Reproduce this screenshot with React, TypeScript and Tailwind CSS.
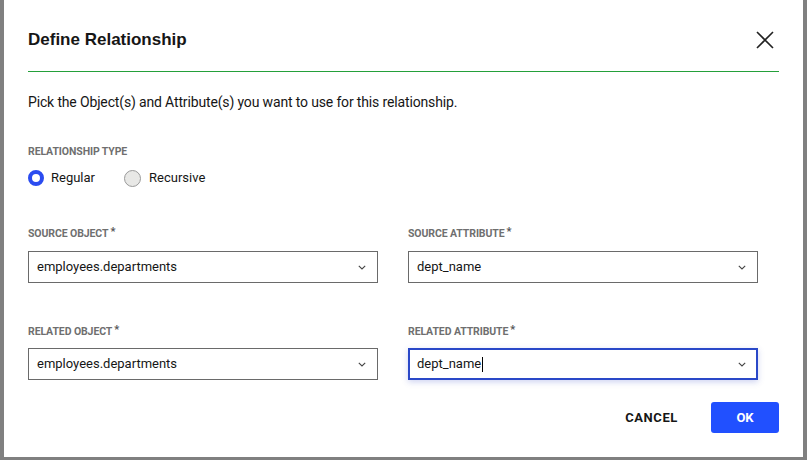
import React from "react";

const font = { fontFamily: "Roboto, 'Liberation Sans', Arial, sans-serif" };

function Chevron() {
  return (
    <svg width="8" height="5" viewBox="0 0 8 5" className="shrink-0">
      <path d="M0.8 0.8 L4 4 L7.2 0.8" fill="none" stroke="#444" strokeWidth="1.1" />
    </svg>
  );
}

function Label({ text, star }: { text: string; star?: boolean }) {
  return (
    <div className="h-[14px] leading-[14px] text-[10.5px] font-bold text-[#6f6f6f] tracking-[-0.1px] uppercase flex items-start">
      {text}
      {star && <span className="ml-[2px] text-[#555] text-[11px] leading-[10px]">*</span>}
    </div>
  );
}

function Select({ value, focused }: { value: string; focused?: boolean }) {
  return (
    <div
      className={
        "h-[32px] w-[350px] bg-white flex items-center justify-between text-[13px] text-[#161616] " +
        (focused
          ? "border-2 border-[#2a48c8] shadow-[0_2px_6px_rgba(60,80,200,0.25)] pl-[7px] pr-[10px]"
          : "border border-[#6a6a6a] pl-[8px] pr-[11px]")
      }
    >
      <span className="flex items-center">
        {value}
        {focused && <span className="inline-block w-px h-[15px] bg-black ml-px" />}
      </span>
      <Chevron />
    </div>
  );
}

export default function App() {
  return (
    <div className="w-[807px] h-[460px] bg-[#808080] relative overflow-hidden" style={font}>
      <div className="absolute left-[4px] top-0 w-[799px] h-[457px] bg-white px-[24px]">
        <div className="pt-[28px] pb-[19px] flex items-center justify-between">
          <div
            className="h-[24px] leading-[24px] text-[17px] font-bold text-[#161616]"
            style={{ fontFamily: "'Liberation Sans', Arial, sans-serif" }}
          >
            Define Relationship
          </div>
          <svg width="18" height="18" viewBox="0 0 18 18" className="mr-[5px]">
            <path d="M1 1 L17 17 M17 1 L1 17" stroke="#222" strokeWidth="1.6" fill="none" />
          </svg>
        </div>
        <div className="h-px bg-[#24a03a]" />
        <div className="mt-[20px] h-[20px] leading-[20px] text-[14px] text-[#161616] tracking-[-0.15px]">
          Pick the Object(s) and Attribute(s) you want to use for this relationship.
        </div>
        <div className="mt-[33px]">
          <Label text="Relationship Type" />
        </div>
        <div className="mt-[9px] h-[20px] flex items-center text-[13px] text-[#161616]">
          <div className="w-[16px] h-[16px] rounded-full border-[4px] border-[#2b4cf0] bg-white" />
          <span className="ml-[7px]">Regular</span>
          <div className="ml-[29px] w-[17px] h-[17px] rounded-full border border-[#9a9a9a] bg-[#e8e8e6]" />
          <span className="ml-[8px]">Recursive</span>
        </div>
        <div className="mt-[39px] grid grid-cols-[350px_350px] gap-x-[30px]">
          <div>
            <Label text="Source Object" star />
            <div className="mt-[10px]">
              <Select value="employees.departments" />
            </div>
          </div>
          <div>
            <Label text="Source Attribute" star />
            <div className="mt-[10px]">
              <Select value="dept_name" />
            </div>
          </div>
          <div className="mt-[42px]">
            <Label text="Related Object" star />
            <div className="mt-[9px]">
              <Select value="employees.departments" />
            </div>
          </div>
          <div className="mt-[42px]">
            <Label text="Related Attribute" star />
            <div className="mt-[9px]">
              <Select value="dept_name" focused />
            </div>
          </div>
        </div>
        <div className="mt-[22px] flex justify-end items-center">
          <div className="text-[13px] font-bold text-[#161616] tracking-[0.6px] mr-[33px]">CANCEL</div>
          <div className="w-[68px] h-[31px] rounded-[3px] bg-[#2150ff] text-white text-[13px] font-bold flex items-center justify-center">
            OK
          </div>
        </div>
      </div>
    </div>
  );
}
